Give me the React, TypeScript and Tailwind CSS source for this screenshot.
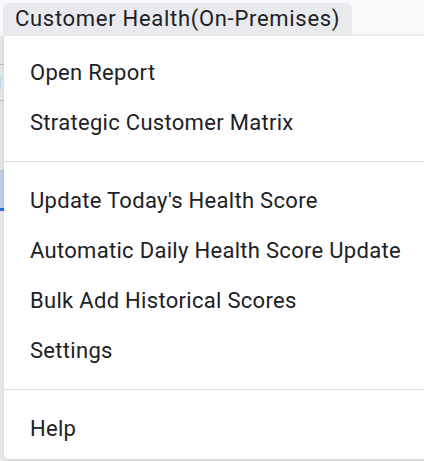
const groups = [
  ['Open Report', 'Strategic Customer Matrix'],
  [
    "Update Today's Health Score",
    'Automatic Daily Health Score Update',
    'Bulk Add Historical Scores',
    'Settings',
  ],
  ['Help'],
]

function MenuItem({ label }: { label: string }) {
  return (
    <div className="flex h-[50px] cursor-pointer items-center pl-[26px] text-[22px] tracking-[0.3px] text-[#202124] hover:bg-[#f1f3f4]">
      {label}
    </div>
  )
}

export default function App() {
  return (
    <div className="relative h-[461px] w-[424px] overflow-hidden bg-[#f1f1f1] font-['Roboto',sans-serif]">
      {/* Menu bar */}
      <div className="flex h-[36px] items-end bg-[#f8f9fa] pl-[3px]">
        <button className="relative z-10 flex h-[33px] items-center rounded-t-[6px] bg-[#e8eaed] px-[12px] pb-[2px] text-[22px] tracking-[0.7px] text-[#202124]">
          Customer Health(On-Premises)
        </button>
      </div>

      {/* Sheet peeking out behind the menu */}
      <div className="flex w-[4px] flex-col">
        <div className="h-[28px] bg-[#eceef0]" />
        <div className="h-px bg-[#c4c7c5]" />
        <div className="flex h-[35px] items-center justify-end overflow-hidden bg-[#eef0f2] text-[20px] text-[#3c4043]">
          <span>1</span>
        </div>
        <div className="h-px bg-[#c4c7c5]" />
        <div className="h-[69px] bg-[#eceef0]" />
        <div className="h-px bg-[#c4c7c5]" />
        <div className="h-[37px] bg-[#c5d6f2]" />
        <div className="h-[3px] bg-[#1a73e8]" />
      </div>

      {/* Dropdown */}
      <div className="absolute left-[4px] top-[36px] w-[440px] rounded-b-[4px] bg-white pb-[6px] pt-[11px] shadow-[0_2px_6px_2px_rgba(60,64,67,0.15)]">
        {groups.map((items, i) => (
          <div key={i}>
            {i > 0 && <div className="mb-[13px] mt-[14px] h-px bg-[#dadce0]" />}
            {items.map((label) => (
              <MenuItem key={label} label={label} />
            ))}
          </div>
        ))}
      </div>
    </div>
  )
}
